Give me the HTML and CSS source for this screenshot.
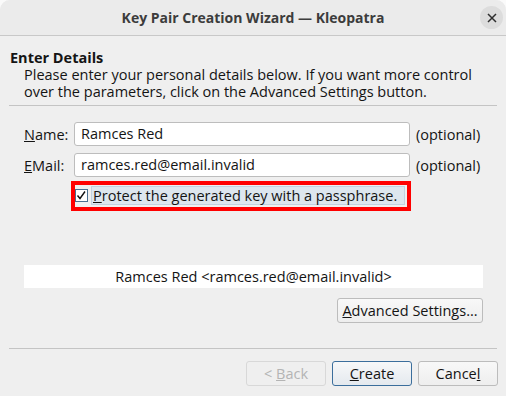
FILE: index.html
```html
<!DOCTYPE html>
<html lang="en">
<head>
    <meta charset="UTF-8">
    <meta name="viewport" content="width=device-width, initial-scale=1.0">
    <title>Key Pair Creation Wizard - Kleopatra</title>
    <link rel="stylesheet" href="styles.css">
</head>
<body>
    <div class="window">
        <div class="titlebar">
            <span></span>
            <span class="title">Key Pair Creation Wizard — Kleopatra</span>
            <span class="close">
                <svg width="10" height="10" viewBox="0 0 10 10"><path d="M1 1 L9 9 M9 1 L1 9" stroke="#2e2e2e" stroke-width="1.5"/></svg>
            </span>
        </div>
        <div class="content">
            <h1>Enter Details</h1>
            <div class="intro">
                <div class="line">Please enter your personal details below. If you want more control</div>
                <div class="line">over the parameters, click on the Advanced Settings button.</div>
            </div>
            <hr class="sep">
            <div class="form">
                <label class="label"><u>N</u>ame:</label>
                <div class="input">Ramces Red</div>
                <span class="hint">(optional)</span>
                <label class="label"><u>E</u>Mail:</label>
                <div class="input">ramces.red@email.invalid</div>
                <span class="hint">(optional)</span>
                <span></span>
                <div class="marked">
                    <span class="check">
                        <svg width="13" height="13" viewBox="0 0 13 13"><rect x="0.5" y="0.5" width="12" height="12" fill="#fff" stroke="#4a6f8f"/><path d="M2.5 6.5 L5 9.5 L10 2.5" fill="none" stroke="#111" stroke-width="1.4"/></svg>
                    </span>
                    <span class="check-label"><u>P</u>rotect the generated key with a passphrase.</span>
                </div>
            </div>
            <div class="summary">Ramces Red &lt;ramces.red@email.invalid&gt;</div>
            <div class="adv-row">
                <button class="btn adv"><u>A</u>dvanced Settings...</button>
            </div>
            <hr class="sep bottom">
            <div class="buttons">
                <button class="btn disabled">&lt; <u>B</u>ack</button>
                <button class="btn default"><u>C</u>reate</button>
                <button class="btn">Cance<u>l</u></button>
            </div>
        </div>
    </div>
</body>
</html>
```

FILE: styles.css
```css
body {
    margin: 0;
    background: #fafafa;
    font-family: "Open Sans", "Noto Sans", sans-serif;
    font-size: 14.5px;
    color: #141414;
}
.window {
    width: 506px;
    height: 396px;
    background: #efefef;
    border-radius: 10px 10px 0 0;
    overflow: hidden;
}
.titlebar {
    height: 35px;
    background: #ebebeb;
    border-bottom: 1px solid #c8c8c8;
    display: grid;
    grid-template-columns: 40px 1fr 40px;
    align-items: center;
}
.title {
    text-align: center;
    font-weight: bold;
    font-size: 14px;
    color: #3c3c3c;
}
.close {
    width: 23px;
    height: 23px;
    border-radius: 50%;
    background: #dcdcdc;
    display: flex;
    align-items: center;
    justify-content: center;
    justify-self: end;
    margin-right: 3px;
}
.content {
    padding: 0 9px;
    line-height: 17px;
}
h1 {
    font-size: 14.5px;
    line-height: 17px;
    margin: 13px 0 0 1px;
}
.intro {
    margin: 0 0 0 15px;
    white-space: nowrap;
}
.line {
    height: 17px;
}
.sep {
    border: none;
    border-top: 1px solid #c4c4c4;
    height: 0;
    margin: 5px 0 0;
}
.form {
    display: grid;
    grid-template-columns: 44px 336px auto;
    column-gap: 6px;
    row-gap: 7px;
    align-items: center;
    margin: 16px 0 0 15px;
}
.input {
    height: 22px;
    line-height: 22px;
    background: #fff;
    border: 1px solid #bdbdbd;
    border-radius: 3px;
    padding: 0 6px;
}
.marked {
    grid-column: 2 / 4;
    justify-self: start;
    width: 330px;
    margin: -3px 0 0 -3px;
    border: 4px solid #ff0000;
    display: flex;
    align-items: center;
    gap: 3px;
    padding: 1px 2px 2px 0;
}
.check {
    display: flex;
}
.check-label {
    flex: 1;
    background: #dde6ee;
    border: 1px solid #c2d2e0;
    padding: 0 1px;
    line-height: 17px;
}
.summary {
    margin: 54px 14px 0 15px;
    height: 23px;
    line-height: 23px;
    background: #fff;
    text-align: center;
}
.adv-row {
    display: flex;
    justify-content: flex-end;
    margin: 10px 14px 0 0;
}
.btn {
    font-family: inherit;
    font-size: 14.5px;
    color: #141414;
    height: 25px;
    padding: 0 4px;
    border: 1px solid #bcbcbc;
    border-radius: 3px;
    background: linear-gradient(#f8f8f8, #eeeeee);
}
.adv {
    width: 146px;
}
.bottom {
    margin-top: 25px;
}
.buttons {
    display: flex;
    justify-content: flex-end;
    gap: 6px;
    margin: 12px -1px 0 0;
}
.buttons .btn {
    width: 80px;
}
.btn.default {
    border-color: #3b6e9c;
    background: linear-gradient(#f7f8f9, #e4e9ee);
}
.btn.disabled {
    color: #b4b4b4;
    border-color: #d8d8d8;
    background: #efefef;
}
```
